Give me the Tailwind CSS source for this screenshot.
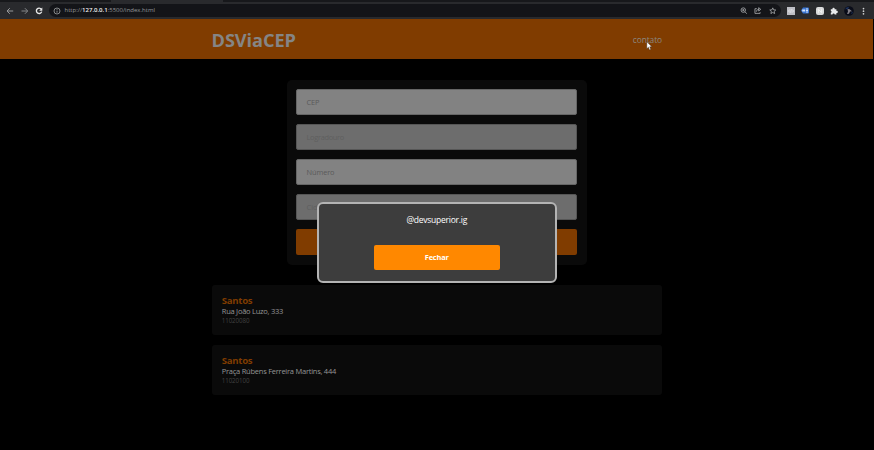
<!DOCTYPE html>
<html lang="pt-BR">
<head>
<meta charset="utf-8">
<title>DSViaCEP</title>
<script src="https://cdn.jsdelivr.net/npm/@tailwindcss/browser@4"></script>
</head>
<body class="relative flex h-[450px] w-[874px] flex-col overflow-hidden bg-black font-['Open_Sans',sans-serif]">
  <!-- Browser toolbar -->
  <div class="flex h-[19px] shrink-0 flex-col bg-[#292a2d]">
    <div class="flex h-[2px] shrink-0 bg-[#17181b]">
      <span class="ml-[111px] h-[2px] w-[112px] bg-[#292a2d]"></span>
    </div>
    <div class="flex h-[17px] items-center">
      <div class="flex w-[49px] shrink-0 items-center gap-[6.500px] pl-[6px]">
        <svg class="size-2 shrink-0 text-[#96989b]" viewBox="0 0 8 8" fill="none" stroke="currentColor" stroke-width="1"><path d="M7.200 4H1.200M3.800 1.200L1 4l2.800 2.800"/></svg>
        <svg class="size-2 shrink-0 text-[#85878a]" viewBox="0 0 8 8" fill="none" stroke="currentColor" stroke-width="1"><path d="M.5 4h6M3.900 1.200L6.700 4 3.900 6.800"/></svg>
        <svg class="size-2 shrink-0 text-[#e8e8e8]" viewBox="0 0 8 8" fill="none" stroke="currentColor" stroke-width="1.400"><path d="M6.300 2.200A2.700 2.700 0 1 0 6.700 4.600"/><path d="M7.300.6v3.200H4.200z" fill="currentColor" stroke="none"/></svg>
      </div>
      <div class="flex h-[13px] w-[732px] shrink-0 items-center rounded-full bg-[#131418] pr-[5px] pl-[4px]">
        <svg class="size-2 shrink-0 text-[#a0a2a5]" viewBox="0 0 8 8" fill="none" stroke="currentColor" stroke-width=".8"><circle cx="4" cy="4" r="3"/><path d="M4 3.600v2.100M4 2.200v.8"/></svg>
        <div class="ml-[3.500px] w-[90px] pb-px text-[6px] leading-[12px] whitespace-nowrap text-[#95979a]">http://<span class="font-semibold text-[#f0f0f0]">127.0.0.1</span>:5500/index.html</div>
        <div class="ml-auto flex items-center gap-[7px] text-[#a5a7aa]">
          <svg class="size-[7.500px]" viewBox="0 0 8 8" fill="none" stroke="currentColor" stroke-width=".9"><circle cx="3.500" cy="3.300" r="2.400"/><path d="M5.200 5l2.200 2.300M2.300 3.300h2.400M3.500 2.100v2.400"/></svg>
          <svg class="size-[7.500px]" viewBox="0 0 8 8" fill="none" stroke="currentColor" stroke-width=".9"><path d="M3 1.800H1v5h5.500V5.500M2.500 5c.2-1.700 1.200-2.500 3-2.500M5 .7l2.200 1.800L5 4.300z"/></svg>
          <svg class="size-[7.500px]" viewBox="0 0 8 8" fill="none" stroke="currentColor" stroke-width=".9"><path d="M4 .9l.9 2.100 2.300.2-1.700 1.500.5 2.300-2-1.200L2 7l.5-2.300L.8 3.200 3.100 3z"/></svg>
        </div>
      </div>
      <div class="flex items-center">
        <svg class="ml-[5.500px] h-2 w-2" viewBox="0 0 8 8"><path d="M0 0h8v8H0z" fill="#bdbec5"/><path d="M2.800 2.500L1.500 4l1.300 1.500M5.200 2.500L6.500 4 5.200 5.500M4.300 2.300l-.6 3.400" fill="none" stroke="#eff0f4" stroke-width=".8"/></svg>
        <svg class="ml-[6.500px] h-[7px] w-2" viewBox="0 0 8 7"><path d="M2 .5h5a1 1 0 0 1 1 1v4a1 1 0 0 1-1 1H2L0 3.500z" fill="#3974d2"/><path d="M1.200 2.500h3v2h-3zM5 1.500h2v1H5zM5 3h2v1H5zM5 4.500h2v1H5z" fill="#d5e4fa"/></svg>
        <svg class="ml-[6.500px] h-2 w-2" viewBox="0 0 8 8"><rect width="8" height="8" rx="2" fill="#d9dadb"/><path d="M2.400 5.800V2.400l3.200 3.200V2.300" fill="none" stroke="#f5f5f5" stroke-width=".9"/></svg>
        <svg class="ml-[6.500px] h-2 w-2" viewBox="0 0 8 8"><path d="M.8 2.200h1.700a1.100 1.100 0 1 1 2.100 0h1.800v1.700a1.100 1.100 0 1 1 0 2.100v1.600H4.700a1.100 1.100 0 0 0-2.200 0H.8V5.800a1.100 1.100 0 0 0 0-2.100z" fill="#e9eaeb"/></svg>
        <svg class="ml-[5.500px] h-[10px] w-[10px]" viewBox="0 0 10 10"><circle cx="5" cy="5" r="4.800" fill="#090c18"/><path d="M1 3.200A4 4 0 0 1 5 1l-1 2zM7 7l2-1.500L8 8z" fill="#1c315c"/><path d="M3.500 3l2 .3 2.500 2-2 .2-1 2.200L3 8l1-2.500z" fill="#85818a"/></svg>
        <svg class="ml-[6px] h-2 w-2" viewBox="0 0 8 8" fill="#d0d1d2"><circle cx="3.500" cy="1.600" r=".85"/><circle cx="3.500" cy="4.200" r=".85"/><circle cx="3.500" cy="6.800" r=".85"/></svg>
      </div>
    </div>
  </div>

  <header class="mr-px flex h-[40px] shrink-0 items-center justify-between bg-[#803c00] pr-[211px] pl-[211.500px]">
    <h1 class="pt-px text-[18.200px] leading-6 font-bold tracking-[-0.08px] text-[#858585]">DSViaCEP</h1>
    <a class="pt-[2px] text-[8.400px] leading-3 tracking-[-0.1px] text-[#8c877f]">contato</a>
  </header>

  <main class="flex flex-col items-center pt-[20.500px]">
    <form class="flex h-[185px] w-[300px] flex-col gap-[9.600px] rounded-[5px] bg-[#0a0a0a] pt-[9.500px] pr-[10px] pl-[9px]">
      <div class="flex h-[25.500px] shrink-0 items-center rounded-[2px] border border-[#666] bg-[#828282] px-[9.500px] pt-px text-[7.400px] tracking-[-0.1px] text-[#5a5a5a]">CEP</div>
      <div class="flex h-[25.500px] shrink-0 items-center rounded-[2px] border border-[#565656] bg-[#6d6d6d] px-[9.500px] pt-px text-[7.400px] tracking-[-0.3px] text-[#5f5f5f]">Logradouro</div>
      <div class="flex h-[25.500px] shrink-0 items-center rounded-[2px] border border-[#666] bg-[#828282] px-[9.500px] pt-px text-[7.400px] tracking-[-0.1px] text-[#5a5a5a]">Número</div>
      <div class="flex h-[25.500px] shrink-0 items-center rounded-[2px] border border-[#565656] bg-[#6d6d6d] px-[9.500px] pt-px text-[7.400px] text-[#5f5f5f]">Cidade</div>
      <div class="h-[25.500px] shrink-0 rounded-[2px] bg-[#803c00]"></div>
    </form>

    <section class="mt-5 flex w-[450.500px] flex-col gap-[10px]">
      <article class="h-[50px] rounded-[3px] bg-[#0a0a0a] px-[10px] pt-[10px]">
        <h2 class="text-[9.600px] leading-[12px] font-bold tracking-[-0.28px] text-[#803c00]">Santos</h2>
        <p class="text-[7.500px] leading-[9.500px] tracking-[-0.245px] text-[#959595]">Rua João Luzo, 333</p>
        <p class="text-[6.200px] leading-[9px] tracking-[-0.08px] text-[#424242]">11020080</p>
      </article>
      <article class="h-[50px] rounded-[3px] bg-[#0a0a0a] px-[10px] pt-[10px]">
        <h2 class="text-[9.600px] leading-[12px] font-bold tracking-[-0.28px] text-[#803c00]">Santos</h2>
        <p class="text-[7.500px] leading-[9.500px] tracking-[-0.245px] text-[#959595]">Praça Rúbens Ferreira Martins, 444</p>
        <p class="text-[6.200px] leading-[9px] tracking-[-0.08px] text-[#424242]">11020100</p>
      </article>
    </section>
  </main>

  <!-- Contact dialog -->
  <div role="dialog" class="absolute top-[202px] left-[316.500px] flex h-[81px] w-[240.500px] flex-col items-center rounded-[6px] border-[2px] border-[#b4b4b4] bg-[#3d3d3d] pt-[10px]">
    <p class="text-[8.500px] leading-[12px] tracking-[-0.25px] text-white">@devsuperior.ig</p>
    <button class="mt-[18.500px] h-[25.500px] w-[125.500px] rounded-[2px] bg-[#ff8800] text-[7.400px] font-bold tracking-[-0.15px] text-white">Fechar</button>
  </div>

  <!-- Mouse pointer -->
  <svg class="absolute top-[41px] left-[646px] h-[10px] w-[7px]" viewBox="0 0 7 10"><path d="M.8.700v7l1.600-1.500 1.100 2.700 1.300-.6-1.100-2.500h2.200z" fill="#fff" stroke="#33251b" stroke-width=".4"/></svg>
</body>
</html>
